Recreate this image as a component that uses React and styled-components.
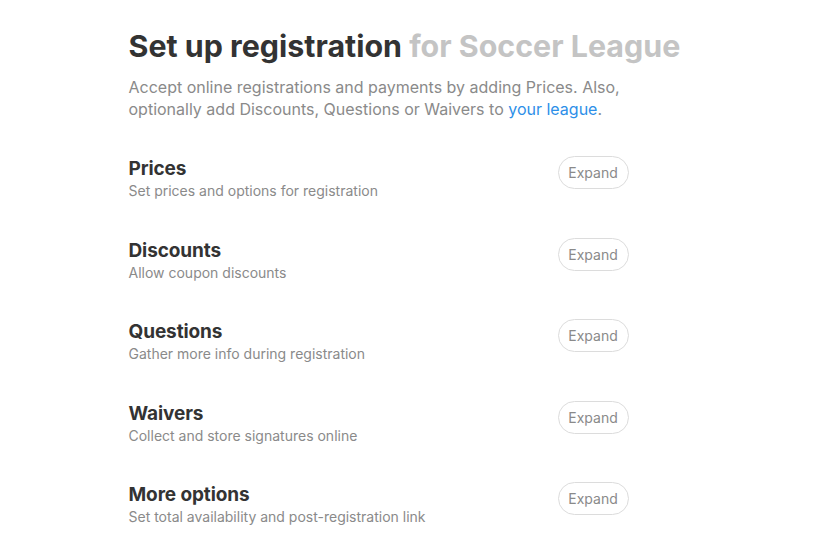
import styled, { createGlobalStyle } from "styled-components";

const GlobalStyle = createGlobalStyle`
  body {
    margin: 0;
    background: #fff;
    font-family: Inter, "Noto Sans", sans-serif;
    -webkit-font-smoothing: antialiased;
  }
`;

const Page = styled.div`
  width: 570px;
  margin: 0 auto;
  padding-top: 27px;
`;

const Title = styled.h1`
  margin: 0;
  font-size: 30.4px;
  font-weight: 700;
  line-height: 38px;
  color: #333;
`;

const Muted = styled.span`
  color: #c4c4c4;
`;

const Intro = styled.p`
  margin: 12px 0 0;
  font-size: 16px;
  line-height: 21.5px;
  color: #8a8a8a;
  width: 500px;
`;

const Link = styled.a`
  color: #2d8fe8;
  text-decoration: none;
`;

const Sections = styled.div`
  width: 500px;
  margin-top: 37px;
  display: flex;
  flex-direction: column;
  gap: 37.5px;
`;

const Row = styled.div`
  display: flex;
  align-items: flex-start;
  justify-content: space-between;
`;

const Info = styled.div`
  display: flex;
  flex-direction: column;
`;

const RowTitle = styled.div`
  font-size: 19px;
  font-weight: 700;
  color: #333;
  line-height: 24px;
  letter-spacing: -0.1px;
`;

const RowSub = styled.div`
  font-size: 14px;
  color: #8a8a8a;
  line-height: 20px;
`;

const ExpandButton = styled.button`
  width: 71px;
  height: 33px;
  margin-top: -1px;
  border: 1px solid #dcdcdc;
  border-radius: 17px;
  background: #fff;
  color: #8a8a8a;
  font-family: inherit;
  font-size: 14px;
  padding: 0;
  cursor: pointer;
`;

const sections = [
  ["Prices", "Set prices and options for registration"],
  ["Discounts", "Allow coupon discounts"],
  ["Questions", "Gather more info during registration"],
  ["Waivers", "Collect and store signatures online"],
  ["More options", "Set total availability and post-registration link"],
];

export default function App() {
  return (
    <>
      <GlobalStyle />
      <Page>
        <Title>
          Set up registration <Muted>for Soccer League</Muted>
        </Title>
        <Intro>
          Accept online registrations and payments by adding Prices. Also,
          optionally add Discounts, Questions or Waivers to{" "}
          <Link href="#">your league</Link>.
        </Intro>
        <Sections>
          {sections.map(([title, sub]) => (
            <Row key={title}>
              <Info>
                <RowTitle>{title}</RowTitle>
                <RowSub>{sub}</RowSub>
              </Info>
              <ExpandButton>Expand</ExpandButton>
            </Row>
          ))}
        </Sections>
      </Page>
    </>
  );
}
